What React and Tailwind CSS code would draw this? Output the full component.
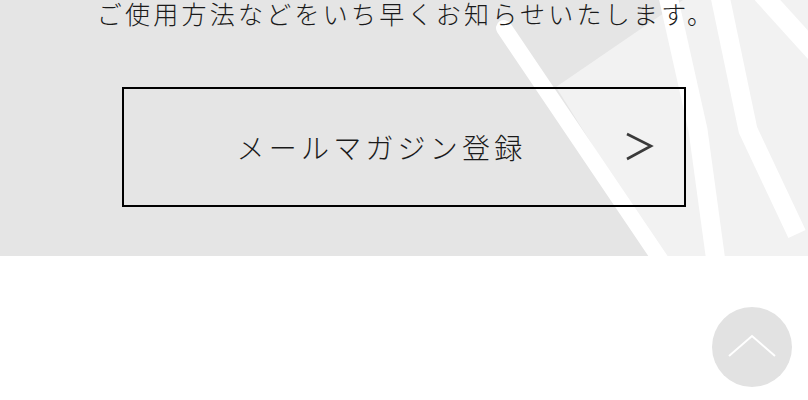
import React from 'react';

const jp = { fontFamily: '"Noto Sans CJK JP", "Noto Sans", sans-serif' };

const Rays = () => (
  <svg className="absolute inset-0 h-full w-full" viewBox="0 0 808 256" preserveAspectRatio="none" aria-hidden="true">
    <polygon points="683,0 808,0 808,256 662,256 556,87" fill="#f2f2f2" />
    <line x1="504" y1="28" x2="662" y2="262" stroke="#ffffff" strokeWidth="16" strokeLinecap="round" />
    <polyline points="668,-4 698,130 716,262" fill="none" stroke="#ffffff" strokeWidth="19" />
    <polyline points="720,-4 748,130 797,234" fill="none" stroke="#ffffff" strokeWidth="19" strokeLinejoin="round" />
    <line x1="762" y1="-6" x2="820" y2="58" stroke="#ffffff" strokeWidth="19" />
  </svg>
);

export default function App() {
  return (
    <div className="min-h-[400px] bg-white text-[#1a1a1a]" style={jp}>
      <section className="relative h-[256px] overflow-hidden bg-[#e5e5e5]">
        <Rays />
        <div className="relative flex flex-col items-center">
          <p className="-mt-[6px] pl-[4px] text-[25px] font-light leading-[38px] tracking-[0.13em]">
            ご使用方法などをいち早くお知らせいたします。
          </p>
          <a href="#" className="mt-[55px] flex h-[120px] w-[564px] items-center border-2 border-black">
            <span className="flex-1 pl-[14px] text-center text-[28px] font-light tracking-[0.15em]">
              メールマガジン登録
            </span>
            <svg width="30" height="32" viewBox="0 0 30 32" className="mr-[29px]">
              <polyline points="2,3 26,15 2,28" fill="none" stroke="#3a3a3a" strokeWidth="2.6" />
            </svg>
          </a>
        </div>
      </section>
      <a href="#" className="fixed bottom-[13px] right-[16px] flex h-[80px] w-[80px] items-center justify-center rounded-full bg-[#e2e2e2]">
        <svg width="50" height="26" viewBox="0 0 50 26">
          <polyline points="2,22 25,2 48,22" fill="none" stroke="#ffffff" strokeWidth="2" />
        </svg>
      </a>
    </div>
  );
}
